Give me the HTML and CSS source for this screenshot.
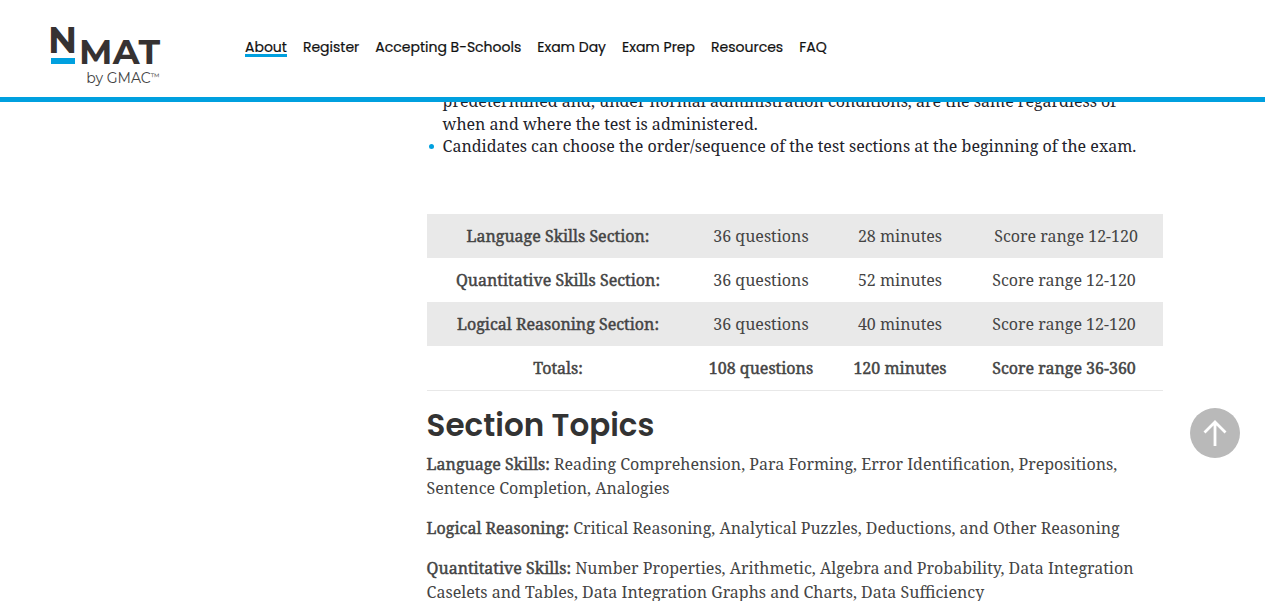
FILE: index.html
```html
<!DOCTYPE html>
<html lang="en">
<head>
<meta charset="utf-8">
<title>NMAT by GMAC</title>
<link rel="stylesheet" href="styles.css">
</head>
<body>
<header class="site-header">
  <a class="logo" href="#">
    <span class="logo-top">
      <span class="logo-n">N</span>
      <span class="logo-mat">MAT</span>
    </span>
    <span class="logo-by">by GMAC<span class="logo-tm">™</span></span>
  </a>
  <nav class="nav">
    <a class="nav-link active" href="#">About</a>
    <a class="nav-link" href="#">Register</a>
    <a class="nav-link" href="#">Accepting B-Schools</a>
    <a class="nav-link" href="#">Exam Day</a>
    <a class="nav-link" href="#">Exam Prep</a>
    <a class="nav-link" href="#">Resources</a>
    <a class="nav-link" href="#">FAQ</a>
  </nav>
</header>
<main class="content">
  <ul class="bullets">
    <li>predetermined and, under normal administration conditions, are the same regardless of when and where the test is administered.</li>
    <li>Candidates can choose the order/sequence of the test sections at the beginning of the exam.</li>
  </ul>
  <table class="sections">
    <tr><th>Language Skills Section:</th><td>36 questions</td><td>28 minutes</td><td>&nbsp;Score range 12-120</td></tr>
    <tr><th>Quantitative Skills Section:</th><td>36 questions</td><td>52 minutes</td><td>Score range 12-120</td></tr>
    <tr><th>Logical Reasoning Section:</th><td>36 questions</td><td>40 minutes</td><td>Score range 12-120</td></tr>
    <tr class="totals"><th>Totals:</th><th>108 questions</th><th>120 minutes</th><th>Score range 36-360</th></tr>
  </table>
  <h2 class="topics-title">Section Topics</h2>
  <p class="topic"><strong class="faux-bold">Language Skills:</strong> Reading Comprehension, Para Forming, Error Identification, Prepositions, Sentence Completion, Analogies</p>
  <p class="topic"><strong class="faux-bold">Logical Reasoning:</strong> Critical Reasoning, Analytical Puzzles, Deductions, and Other Reasoning</p>
  <p class="topic"><strong class="faux-bold">Quantitative Skills:</strong> Number Properties, Arithmetic, Algebra and Probability, Data Integration Caselets and Tables, Data Integration Graphs and Charts, Data Sufficiency</p>
</main>
<a class="to-top" href="#" aria-label="Back to top">
  <svg viewBox="0 0 24 26" width="24" height="26" fill="none" stroke="#fff" stroke-width="2.8">
    <path d="M12 26V2M1.500 12.500 12 2l10.500 10.500"/>
  </svg>
</a>
</body>
</html>
```
FILE: styles.css
```css
html, body { margin: 0; padding: 0; height: 601px; overflow: hidden; background: #fff; }
body { font-family: "Noto Serif", "DejaVu Serif", serif; font-size: 16px; color: #444; }
.site-header {
  position: fixed; top: 0; left: 0; right: 0; height: 97px;
  background: #fff; border-bottom: 5px solid #00a0df; z-index: 5;
  display: flex; align-items: flex-start;
}
.logo { display: flex; flex-direction: column; align-items: flex-end; width: 110px; margin: 27px 0 0 51px; text-decoration: none; }
.logo-top { display: flex; align-items: flex-start; width: 110px; height: 43px; }
.logo-n { font: 700 36px/26px "Montserrat", "DejaVu Sans", sans-serif; color: #363232; width: 24px; height: 31px; margin-right: 4px; text-indent: -3px; border-bottom: 6px solid #00a0df; }
.logo-mat { font: 700 35px/25px "Montserrat", "DejaVu Sans", sans-serif; color: #363232; margin-top: 12px; letter-spacing: 0.3px; white-space: nowrap; }
.logo-by { font: 400 14px/14px "Montserrat", "Inter", sans-serif; color: #444; margin-right: 1px; white-space: nowrap; }
.logo-tm { font-size: 9px; vertical-align: 3px; }
.nav { display: flex; gap: 16px; margin: 40px 0 0 84px; }
.nav-link { font: 400 14px/14px "Poppins", "Inter", sans-serif; color: #111; -webkit-text-stroke: 0.2px currentColor; text-decoration: none; border-bottom: 3px solid transparent; }
.nav-link.active { border-bottom-color: #00a0df; }
.content { width: 736.4px; margin-left: 426.6px; padding-top: 90.3px; }
.bullets { list-style: none; margin: 0 0 56.5px; padding: 0 0 0 16px; color: #22222a; line-height: 22.4px; }
.bullets li { position: relative; }
.bullets li + li::before { content: ""; position: absolute; left: -14px; top: 9px; width: 5px; height: 5px; border-radius: 50%; background: #00a0df; }
.sections { width: 736px; margin-left: 0.4px; border-collapse: collapse; border-bottom: 1px solid #e8e8e8; table-layout: fixed; }
.sections tr { height: 44px; }
.sections tr:nth-child(odd):not(.totals) { background: #e9e9e9; }
.sections th, .sections td { padding: 0; text-align: center; font-size: 16px; font-weight: 400; }
.sections th, .faux-bold { font-weight: 400; -webkit-text-stroke: 0.45px currentColor; }
.sections tr > :first-child { width: 262px; }
.sections tr > :nth-child(2) { width: 144px; }
.sections tr > :nth-child(3) { width: 134px; }
.sections tr > :nth-child(4) { padding-right: 2px; }
.topics-title { font: 600 31px/40px "Poppins", "Inter", sans-serif; color: #333; margin: 14px 0 7px; }
.topic { margin: 0 0 16px; line-height: 24px; }
.to-top { position: fixed; left: 1190px; top: 408px; width: 50px; height: 50px; border-radius: 50%; background: #b9b9b9; display: flex; align-items: center; justify-content: center; }
```
